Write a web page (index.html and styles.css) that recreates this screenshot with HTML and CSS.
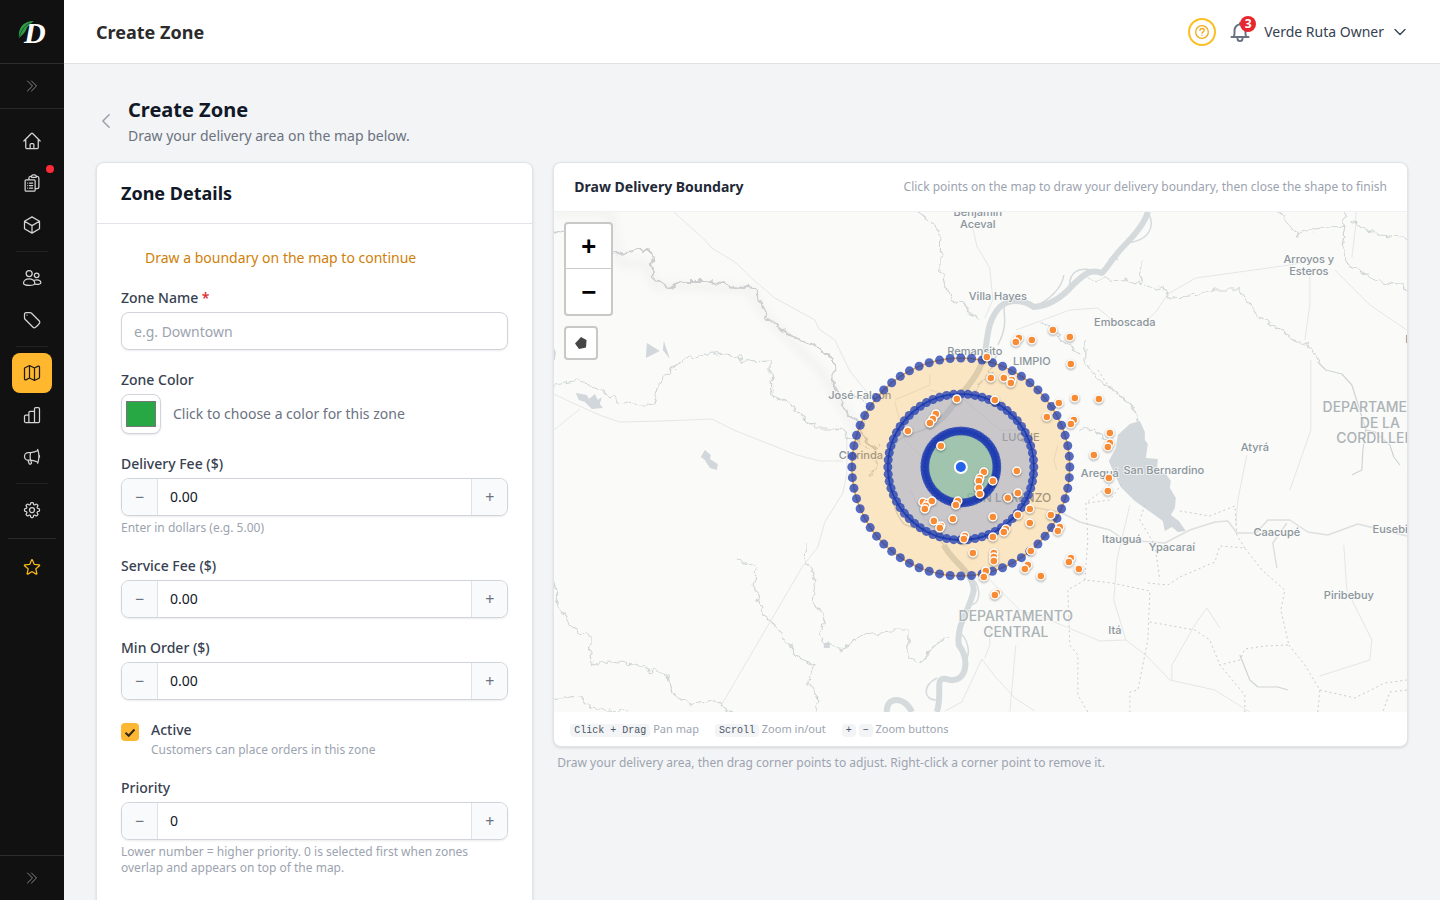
FILE: index.html
```html
<!DOCTYPE html>
<html lang="en">
<head>
<meta charset="utf-8">
<title>Create Zone</title>
<meta name="viewport" content="width=device-width, initial-scale=1">
<link rel="stylesheet" href="styles.css">
</head>
<body>
<div class="app">
  <aside class="sidebar">
    <a class="logo" href="#" aria-label="Home">
      <svg width="32" height="32" viewBox="0 0 32 32">
        <text class="logo-letter" x="8" y="27">D</text>
        <path d="M3 22C2 13 6 5 18 5C14 8 12 9 10 14C9 17 6 19 3 22Z" fill="#2f9e44"/>
        <path d="M3 22C5 15 8 10 14 7" fill="none" stroke="#14532d" stroke-width="1"/>
      </svg>
    </a>
    <button class="side-toggle" type="button" aria-label="Expand menu">
      <svg class="icon" viewBox="0 0 24 24"><path d="M5.25 4.5l7.5 7.5-7.5 7.5m6-15l7.5 7.5-7.5 7.5"/></svg>
    </button>
    <nav class="nav">
      <a class="nav-item" href="#" aria-label="Dashboard"><svg class="icon" viewBox="0 0 24 24"><path d="M2.25 12l8.954-8.955c.44-.439 1.152-.439 1.591 0L21.75 12M4.5 9.75v10.125c0 .621.504 1.125 1.125 1.125H9.75v-4.875c0-.621.504-1.125 1.125-1.125h2.25c.621 0 1.125.504 1.125 1.125V21h4.125c.621 0 1.125-.504 1.125-1.125V9.75M8.25 21h8.25"/></svg></a>
      <a class="nav-item" href="#" aria-label="Orders"><svg class="icon" viewBox="0 0 24 24"><path d="M9 12h3.75M9 15h3.75M9 18h3.75m3 .75H18a2.25 2.25 0 002.25-2.25V6.108c0-1.135-.845-2.098-1.976-2.192a48.424 48.424 0 00-1.123-.08m-5.801 0c-.065.21-.1.433-.1.664 0 .414.336.75.75.75h4.5a.75.75 0 00.75-.75 2.25 2.25 0 00-.1-.664m-5.8 0A2.251 2.251 0 0113.5 2.25H15c1.012 0 1.867.668 2.15 1.586m-5.8 0c-.376.023-.75.05-1.124.08C9.095 4.01 8.25 4.973 8.25 6.108V8.25m0 0H4.875c-.621 0-1.125.504-1.125 1.125v11.25c0 .621.504 1.125 1.125 1.125h9.75c.621 0 1.125-.504 1.125-1.125V9.375c0-.621-.504-1.125-1.125-1.125H8.25zM6.75 12h.008v.008H6.75V12zm0 3h.008v.008H6.75V15zm0 3h.008v.008H6.75V18z"/></svg><span class="dot"></span></a>
      <a class="nav-item" href="#" aria-label="Products"><svg class="icon" viewBox="0 0 24 24"><path d="M21 7.5l-9-5.25L3 7.5m18 0l-9 5.25m9-5.25v9l-9 5.25M3 7.5l9 5.25M3 7.5v9l9 5.25m0-9v9"/></svg></a>
      <hr class="nav-line">
      <a class="nav-item" href="#" aria-label="Customers"><svg class="icon" viewBox="0 0 24 24"><circle cx="8.6" cy="6.6" r="3.6"/><circle cx="17.6" cy="8.8" r="2.8"/><path d="M1.8 18.2C1.8 15 5 13 8.6 13s6.8 2 6.8 5.200c0 1.800-3.400 2.600-6.800 2.600s-6.800-.8-6.800-2.600zM14.800 14.800c.8-.5 1.800-.7 2.800-.7 2.800 0 5 1.600 5 3.700 0 1.500-3 2.300-7.200 1.600"/></svg></a>
      <a class="nav-item" href="#" aria-label="Promotions"><svg class="icon" viewBox="0 0 24 24"><path d="M9.568 3H5.25A2.25 2.25 0 003 5.25v4.318c0 .597.237 1.17.659 1.591l9.581 9.581c.699.699 1.78.872 2.607.33a18.095 18.095 0 005.223-5.223c.542-.827.369-1.908-.33-2.607L11.16 3.66A2.25 2.25 0 009.568 3zM6 6h.008v.008H6V6z"/></svg></a>
      <hr class="nav-line">
      <a class="nav-item nav-active" href="#" aria-label="Zones" aria-current="page"><svg class="icon" viewBox="0 0 24 24"><path d="M9 3.200V18m6-12v14.800m.503-.052l4.875-2.437c.381-.19.622-.58.622-1.006V4.82c0-.836-.88-1.38-1.628-1.006l-3.869 1.934c-.317.159-.69.159-1.006 0L9.503 3.252a1.125 1.125 0 00-1.006 0L3.622 5.689C3.24 5.88 3 6.27 3 6.695V19.18c0 .836.88 1.38 1.628 1.006l3.869-1.934c.317-.159.69-.159 1.006 0l4.994 2.497c.317.158.69.158 1.006 0z"/></svg></a>
      <a class="nav-item" href="#" aria-label="Reports"><svg class="icon" viewBox="0 0 24 24"><path d="M3 13.500C3 12.700 3.700 12 4.500 12h3.750v9H4.500C3.700 21 3 20.300 3 19.500zM8.250 21V9c0-.8.7-1.500 1.500-1.500h5.250V21zM15 21V4.500c0-.8.7-1.500 1.500-1.500h3c.8 0 1.500.7 1.500 1.500v15c0 .8-.7 1.500-1.500 1.500z"/></svg></a>
      <a class="nav-item" href="#" aria-label="Marketing"><svg class="icon" viewBox="0 0 24 24"><path d="M10.34 15.84c-.688-.06-1.386-.09-2.09-.09H7.5a4.5 4.5 0 110-9h.75c.704 0 1.402-.03 2.09-.09m0 9.18c.253.962.584 1.892.985 2.783.247.55.06 1.21-.463 1.511l-.657.38c-.551.318-1.26.117-1.527-.461a20.845 20.845 0 01-1.44-4.282m3.102.069a18.03 18.03 0 01-.59-4.59c0-1.586.205-3.124.59-4.59m0 9.18a23.848 23.848 0 018.835 2.535M10.34 6.66a23.847 23.847 0 008.835-2.535m0 0A23.74 23.74 0 0018.795 3m.38 1.125a23.91 23.91 0 011.014 5.395m-1.014 8.855c-.118.38-.245.754-.38 1.125m.38-1.125a23.91 23.91 0 001.014-5.395m0-3.46c.495.413.811 1.035.811 1.73 0 .695-.316 1.317-.811 1.73m0-3.46a24.347 24.347 0 010 3.46"/></svg></a>
      <hr class="nav-line">
      <a class="nav-item" href="#" aria-label="Settings"><svg class="icon" viewBox="0 0 24 24"><path d="M10.343 3.94c.09-.542.56-.94 1.11-.94h1.093c.55 0 1.02.398 1.11.94l.149.894c.07.424.384.764.78.93.398.164.855.142 1.205-.108l.737-.527a1.125 1.125 0 011.45.12l.773.774c.39.389.44 1.002.12 1.45l-.527.737c-.25.35-.272.806-.107 1.204.165.397.505.71.93.78l.893.15c.543.09.94.56.94 1.109v1.094c0 .55-.397 1.02-.94 1.11l-.893.149c-.425.07-.765.383-.93.78-.165.398-.143.854.107 1.204l.527.738c.32.447.269 1.06-.12 1.45l-.774.773a1.125 1.125 0 01-1.449.12l-.738-.527c-.35-.25-.806-.272-1.203-.107-.397.165-.71.505-.781.929l-.149.894c-.09.542-.56.94-1.11.94h-1.094c-.55 0-1.019-.398-1.11-.94l-.148-.894c-.071-.424-.384-.764-.781-.93-.398-.164-.854-.142-1.204.108l-.738.527c-.447.32-1.06.269-1.45-.12l-.773-.774a1.125 1.125 0 01-.12-1.45l.527-.737c.25-.35.273-.806.108-1.204-.165-.397-.505-.71-.93-.78l-.894-.15c-.542-.09-.94-.56-.94-1.109v-1.094c0-.55.398-1.02.94-1.11l.894-.149c.424-.07.765-.383.93-.78.165-.398.143-.854-.107-1.204l-.527-.738a1.125 1.125 0 01.12-1.45l.773-.773a1.125 1.125 0 011.45-.12l.737.527c.35.25.807.272 1.204.107.397-.165.71-.505.78-.929l.15-.894zM15 12a3 3 0 11-6 0 3 3 0 016 0z"/></svg></a>
      <div class="nav-extra">
        <a class="nav-item nav-star" href="#" aria-label="Upgrade"><svg class="icon" viewBox="0 0 24 24"><path d="M11.48 3.499a.562.562 0 011.04 0l2.125 5.111a.563.563 0 00.475.345l5.518.442c.499.04.701.663.321.988l-4.204 3.602a.563.563 0 00-.182.557l1.285 5.385a.562.562 0 01-.84.61l-4.725-2.885a.563.563 0 00-.586 0L6.982 20.54a.562.562 0 01-.84-.61l1.285-5.386a.562.562 0 00-.182-.557l-4.204-3.602a.563.563 0 01.321-.988l5.518-.442a.563.563 0 00.475-.345L11.48 3.5z"/></svg></a>
      </div>
    </nav>
    <button class="side-toggle side-bottom" type="button" aria-label="Expand menu">
      <svg class="icon" viewBox="0 0 24 24"><path d="M5.25 4.5l7.5 7.5-7.5 7.5m6-15l7.5 7.5-7.5 7.5"/></svg>
    </button>
  </aside>

  <div class="page">
    <header class="topbar">
      <div class="topbar-title">Create Zone</div>
      <div class="topbar-right">
        <button class="help" type="button" aria-label="Help">
          <svg width="16" height="16" viewBox="0 0 24 24"><circle cx="12" cy="12" r="9.500"/><path d="M8.800 9.400c.3-1.700 1.600-2.600 3.300-2.600 1.800 0 3.200 1 3.200 2.700 0 2.300-3.200 2.200-3.200 4.400M12 17v.300"/></svg>
        </button>
        <button class="bell" type="button" aria-label="Notifications">
          <svg width="24" height="24" viewBox="0 0 24 24"><path d="M3.500 17H20.500M5.500 17C7 15 6.500 13 6.500 10.500A5.500 6 0 0 1 17.500 10.500C17.500 13 17 15 18.500 17M9.500 18.500a2.500 2.500 0 0 0 5 0M12 4.500V3"/></svg>
          <span class="badge">3</span>
        </button>
        <button class="user" type="button">Verde Ruta Owner
          <svg width="16" height="16" viewBox="0 0 24 24"><path d="M19.500 8.250l-7.500 7.500-7.500-7.500"/></svg>
        </button>
      </div>
    </header>

    <main class="content">
      <div class="heading">
        <a class="back" href="#" aria-label="Back"><svg width="20" height="20" viewBox="0 0 24 24"><path d="M15.750 19.500L8.250 12l7.500-7.500"/></svg></a>
        <div>
          <h1>Create Zone</h1>
          <p>Draw your delivery area on the map below.</p>
        </div>
      </div>

      <div class="columns">
        <section class="card">
          <h2 class="card-title">Zone Details</h2>
          <form class="form">
            <p class="warning">Draw a boundary on the map to continue</p>
            <div class="field">
              <label for="name">Zone Name <span class="required">*</span></label>
              <input class="text-input" id="name" type="text" placeholder="e.g. Downtown">
            </div>
            <div class="field">
              <label for="color">Zone Color</label>
              <div class="color-row">
                <input class="color-input" id="color" type="color" value="#28a745">
                <span>Click to choose a color for this zone</span>
              </div>
            </div>
            <div class="field">
              <label for="delivery">Delivery Fee ($)</label>
              <div class="stepper"><button type="button" aria-label="Decrease">−</button><input id="delivery" type="text" value="0.00"><button type="button" aria-label="Increase">+</button></div>
              <p class="note">Enter in dollars (e.g. 5.00)</p>
            </div>
            <div class="field">
              <label for="service">Service Fee ($)</label>
              <div class="stepper"><button type="button" aria-label="Decrease">−</button><input id="service" type="text" value="0.00"><button type="button" aria-label="Increase">+</button></div>
            </div>
            <div class="field">
              <label for="min">Min Order ($)</label>
              <div class="stepper"><button type="button" aria-label="Decrease">−</button><input id="min" type="text" value="0.00"><button type="button" aria-label="Increase">+</button></div>
            </div>
            <div class="check-row">
              <span class="check">
                <input id="active" type="checkbox" checked>
                <svg width="18" height="18" viewBox="0 0 18 18"><path d="M4.500 9.800l3.200 3 5.800-6.300"/></svg>
              </span>
              <div>
                <label for="active">Active</label>
                <p class="note">Customers can place orders in this zone</p>
              </div>
            </div>
            <div class="field">
              <label for="priority">Priority</label>
              <div class="stepper"><button type="button" aria-label="Decrease">−</button><input id="priority" type="text" value="0"><button type="button" aria-label="Increase">+</button></div>
              <p class="note">Lower number = higher priority. 0 is selected first when zones overlap and appears on top of the map.</p>
            </div>
          </form>
        </section>

        <div class="map-column">
          <section class="card">
            <div class="map-head">
              <h3>Draw Delivery Boundary</h3>
              <p>Click points on the map to draw your delivery boundary, then close the shape to finish</p>
            </div>
            <div class="map">
              <svg class="map-art" viewBox="554 212 853 500" preserveAspectRatio="xMidYMid slice">
                <defs>
                  <filter id="meander" x="-5%" y="-5%" width="110%" height="110%" color-interpolation-filters="sRGB">
                    <feTurbulence type="fractalNoise" baseFrequency="0.11" numOctaves="2" seed="4"/>
                    <feDisplacementMap in="SourceGraphic" scale="11" xChannelSelector="R" yChannelSelector="G"/>
                  </filter>
                  <filter id="soft"><feGaussianBlur stdDeviation="4"/></filter>
                </defs>
                <g class="roads">
                  <path d="M674 212L704 239L712 248L735 262L755 281L775 298L815 320L819 329L835 340L850 371L867 392M554 430L580 409M557 663M554 394L575 404L602 416L620 422L662 421L712 419L734 430L797 455L820 461H843M847 437V474L843 493L825 522L818 547L803 566L721 706"/>
                  <path d="M973 228L977 246L990 268L993 300L985 318M1168 294L1196 278L1290 265L1305 262M1168 294L1156 312L1147 320M1016 330L1070 310L1098 308L1110 318M1310 270V305L1305 340M1356 212V225L1352 258M1335 270L1370 305L1407 330M1311 360V430L1290 490M1247 455L1238 500L1236 525M990 580L1020 610L1045 618L1100 641L1126 640L1146 655L1170 680L1215 690L1250 712M985 658L990 645V630M945 711L962 702L982 659L994 675L1015 698L1035 711M1010 712L1016 645M1126 640L1114 600L1117 560L1130 505M1172 680V665L1195 625L1207 608L1220 628M1344 545L1347 590L1372 640L1370 660L1320 676"/>
                  <path d="M895 400L930 385V374M930 390L965 400L1000 430M895 402L905 440L935 470M1000 430H1030M910 490L925 520L960 520M1058 445L1054 460L1057 470"/>
                </g>
                <g class="highways">
                  <path d="M1060 512L1080 522L1110 530L1125 540L1165 543L1190 530L1215 522L1228 521L1237 533H1256L1268 520L1290 520L1308 532L1328 535L1358 524L1378 529L1407 536M1287 523L1273 543L1277 568M1020 505L1060 512"/>
                </g>
                <path class="haze" d="M554 212H610L620 264H646L656 286L680 286L750 290L765 315L790 340L820 370L845 410L860 440" filter="url(#soft)"/>
                <g class="streams" filter="url(#meander)">
                  <path class="thick" d="M550 230L566 232L610 254L650 249L655 279L669 289L680 282L705 282L735 286L755 288L762 304L768 320L788 334L813 345L833 358L834 385L843 408L855 420L870 445L880 455"/>
                  <path d="M550 387L578 380L602 390L618 402L635 404L655 406L661 380L685 358L705 355L725 353L745 361L771 360L772 395L790 404L813 428L835 428L850 438L870 450"/>
                  <path d="M553 578L560 610L575 630L590 636L592 665L605 662L635 664L668 676L672 693L690 706L712 701L732 712M552 698L580 695L590 708L630 712M736 561L756 567L755 595L765 615L776 625L790 645L800 660L815 665L808 682L818 700L813 716"/>
                  <path d="M805 543L806 562L815 580L812 600L825 620L820 640L840 650L860 635L890 630L908 630L908 660L920 662L935 645L948 639"/>
                  <path d="M918 212L942 232L941 270L949 300L962 303L978 320"/>
                  <path d="M1087 278L1125 280L1140 285L1140 260M1145 285L1165 290L1170 298L1190 297L1215 290L1240 290L1258 315L1285 335L1308 345L1320 362"/>
                  <path d="M1279 210L1297 235L1325 228L1345 225L1345 208M1345 225L1342 250L1350 265L1375 280L1400 285L1412 297M1350 222L1380 235L1412 238M1086 340L1086 360L1100 380L1120 395L1138 415L1140 425M1080 430L1095 428L1108 443"/>
                  <path d="M1040 320L1052 330L1070 345L1082 355M1000 352L990 372L970 395M855 395L870 405L860 430M880 445L870 480"/>
                </g>
                <g class="streams">
                  <path d="M1318 362L1326 370L1342 374L1352 385L1358 404L1366 430L1363 450L1362 470L1352 475M1366 430L1375 432L1390 445L1394 457L1400 465M1240 655L1250 680L1258 687L1278 687L1288 690"/>
                </g>
                <g class="river">
                  <path d="M1148 212C1144 226 1130 240 1124 246C1112 258 1108 268 1102 273C1090 268 1084 275 1073 285C1060 300 1048 306 1034 307C1024 300 1010 298 1000 307C988 320 988 335 986 347C984 365 975 378 965 390C953 405 945 420 928 428M944 545C952 562 972 570 974 590C970 610 956 625 959 645C970 660 967 682 950 680C932 674 944 690 937 712M887 712C886 696 905 696 912 712"/>
                  <path class="channel" d="M1148 212C1156 226 1150 242 1124 243M1102 273C1078 264 1068 272 1070 290M1108 268C1108 256 1114 255 1118 260M1034 307C1050 300 1062 288 1064 275M1005 303C1002 315 1010 322 998 345M974 580C982 590 980 605 970 605M937 678C922 686 924 700 936 700M959 632C970 640 970 655 966 660M928 428C910 436 900 434 892 450C886 480 892 510 904 524C915 530 930 528 944 545"/>
                </g>
                <g class="lake">
                  <path d="M1140 421L1145 432L1145 440L1148 444L1146 458L1158 459L1157 471L1166 474L1171 481L1170 488L1176 498L1175 508L1171 515L1179 521L1186 531L1178 532L1172 527L1165 531L1163 521L1152 513L1135 501L1121 487L1115 475L1109 461L1116 448L1118 435L1130 424Z"/>
                  <path d="M647 343L660 351L646 358ZM664 341L667 350L670 359L663 350ZM576 393L587 395L589 399L595 394L598 400L602 397L600 404L603 408L592 409L585 402L579 400ZM701 457L705 450L711 455L710 459L718 464L717 470L710 468L705 460ZM824 643H830V648H824ZM554 348L556 352L555 360L554 360Z"/>
                </g>
                <path class="borders" d="M1110 485L1086 503L1088 540L1085 580L1112 583L1150 591L1148 640L1138 690L1130 692V712M1088 503L1110 500L1122 484M1098 370L1110 388L1125 400M1145 505L1140 520L1155 545L1160 580M1085 580L1068 590L1070 645L1078 655V695L1088 712M1148 583L1168 585L1180 577L1215 562L1220 546L1245 548L1262 570L1285 590L1281 610L1289 645L1265 646L1245 649L1240 660L1220 665L1245 695V712M1289 645L1305 665L1320 690L1318 712M1320 690L1355 698L1385 683L1407 680M1150 622L1195 630L1210 640L1220 665M1180 511L1210 516L1235 506L1237 535L1245 548M1407 690L1390 692L1383 712"/>
                <g class="places">
                  <text x="978" y="216">Benjamín</text><text x="978" y="228">Aceval</text>
                  <text x="998" y="300">Villa Hayes</text><text x="975" y="355">Remansito</text>
                  <text x="1125" y="326">Emboscada</text><text x="1309" y="263">Arroyos y</text><text x="1309" y="275">Esteros</text>
                  <text x="1032" y="365">LIMPIO</text><text x="860" y="399">José Falcón</text><text x="861" y="459">Clorinda</text>
                  <text x="1021" y="441">LUQUE</text><text x="1009" y="502" class="city">SAN LORENZO</text>
                  <text x="1100" y="477">Areguá</text><text x="1164" y="474">San Bernardino</text>
                  <text x="1255" y="451">Atyrá</text><text x="1122" y="543">Itauguá</text><text x="1172" y="551">Ypacaraí</text>
                  <text x="1277" y="536">Caacupé</text><text x="1399" y="533">Eusebio A</text><text x="1349" y="599">Piribebuy</text>
                  <text x="1115" y="634">Itá</text><text x="1409" y="343">P</text>
                </g>
                <g class="regions">
                  <text x="1016" y="621">DEPARTAMENTO</text><text x="1016" y="637">CENTRAL</text>
                  <text x="1380" y="412">DEPARTAMENTO</text><text x="1380" y="428">DE LA</text><text x="1380" y="443">CORDILLERA</text>
                </g>
                <circle class="zone zone-far" cx="961" cy="467" r="109"/>
                <circle class="zone zone-mid" cx="961" cy="467" r="73"/>
                <circle class="zone zone-near" cx="961" cy="467" r="36"/>
                <g id="vertices" class="vertices"></g>
                <circle class="centre" cx="961" cy="467" r="6"/>
                <g id="orders" class="orders"></g>
              </svg>
              <div class="map-tools">
                <div class="tool-group zoom-group"><button type="button" aria-label="Zoom in">+</button><button type="button" aria-label="Zoom out">−</button></div>
                <div class="tool-group draw-group"><button type="button" aria-label="Draw a polygon"><svg width="12" height="12" viewBox="0 0 12 12"><path d="M6 0L11.500 3L11 10.500L4 12L0 6.500Z"/></svg></button></div>
              </div>
            </div>
            <div class="map-foot">
              <span><kbd>Click + Drag</kbd> Pan map</span>
              <span><kbd>Scroll</kbd> Zoom in/out</span>
              <span><kbd>+</kbd> <kbd>−</kbd> Zoom buttons</span>
            </div>
          </section>
          <p class="map-note">Draw your delivery area, then drag corner points to adjust. Right-click a corner point to remove it.</p>
        </div>
      </div>
    </main>
  </div>
</div>
<script src="map.js"></script>
</body>
</html>
```
FILE: styles.css
```css
* { box-sizing: border-box; }
body, h1, h2, h3, p { margin: 0; }
body { font: 14px/20px "Noto Sans", sans-serif; color: #374151; background: #f3f4f6; }
button, input { font: inherit; color: inherit; }
button { border: 0; padding: 0; background: none; cursor: pointer; }
svg { display: block; }
.app { display: flex; height: 100vh; }

.sidebar { flex: 0 0 64px; display: flex; flex-direction: column; background: #111; }
.logo { height: 64px; display: flex; align-items: center; justify-content: center; border-bottom: 1px solid #2b2e31; }
.logo-letter { font: italic bold 30px "Liberation Serif", serif; fill: #fff; }
.icon { width: 20px; height: 20px; fill: none; stroke: currentColor; stroke-width: 1.5; stroke-linecap: round; stroke-linejoin: round; }
.side-toggle { height: 45px; display: flex; align-items: center; justify-content: center; color: #858585; border-bottom: 1px solid #25292c; }
.side-toggle .icon { width: 16px; height: 16px; }
.side-bottom { border-bottom: 0; border-top: 1px solid #2b2e31; }
.nav { flex: 1; display: flex; flex-direction: column; align-items: center; gap: 2px; padding: 12px 8px; }
.nav-item { position: relative; width: 40px; height: 40px; display: flex; align-items: center; justify-content: center; border-radius: 8px; color: #d4d4d4; }
.nav-active { background: #ffb82e; color: #1f1a10; }
.nav-line { width: 32px; height: 1px; margin: 4px 0; border: 0; background: #222; }
.dot { position: absolute; top: 2px; right: -2px; width: 8px; height: 8px; border-radius: 50%; background: #fb2c36; }
.nav-extra { align-self: stretch; display: flex; justify-content: center; margin-top: 6px; padding-top: 8px; border-top: 1px solid #262a2d; }
.nav-star { color: #fbb91a; }

.page { flex: 1; min-width: 0; display: flex; flex-direction: column; }
.topbar { flex: 0 0 64px; display: flex; align-items: center; justify-content: space-between; padding: 0 32px; background: #fff; border-bottom: 1px solid #dfe1e4; }
.topbar-title { font-size: 18px; font-weight: 700; color: #2b2b2b; }
.topbar-right { display: flex; align-items: center; gap: 12px; }
.topbar-right svg, .back svg { fill: none; stroke: currentColor; stroke-linecap: round; stroke-linejoin: round; stroke-width: 2; }
.help { width: 28px; height: 28px; display: flex; align-items: center; justify-content: center; border: 2px solid #fbbf24; border-radius: 50%; color: #f3a81c; }
.bell { position: relative; color: #6b7280; }
.badge { position: absolute; top: -4px; right: -4px; width: 16px; height: 16px; border-radius: 50%; background: #e7262f; color: #fff; font-size: 12px; line-height: 16px; font-weight: 700; text-align: center; }
.user { display: flex; align-items: center; gap: 8px; color: #374151; }

.content { flex: 1; overflow: auto; scrollbar-width: none; padding: 32px; }
.heading { display: flex; align-items: center; gap: 12px; margin-bottom: 16px; }
.heading h1 { font-size: 20px; line-height: 28px; font-weight: 700; color: #111827; margin-bottom: 2px; }
.heading p { color: #6b7280; }
.back { color: #9ca3af; }
.columns { display: grid; grid-template-columns: calc(100% / 3) minmax(0, 1fr); gap: 20px; align-items: start; }
.card { background: #fff; border: 1px solid #e1e4e8; border-radius: 8px; box-shadow: 0 1px 3px rgba(0,0,0,.12); overflow: hidden; }
.card-title { padding: 16px 24px; font-size: 18px; line-height: 28px; font-weight: 700; color: #111827; border-bottom: 1px solid #e1e4e8; }

.form { display: flex; flex-direction: column; gap: 20px; padding: 24px 24px 32px; }
.warning { padding-left: 24px; color: #d08008; }
.field { display: flex; flex-direction: column; gap: 4px; }
label { font-weight: 500; display: block; }
.required { color: #dc2626; }
.text-input, .stepper { height: 38px; border: 1px solid #d1d5db; border-radius: 8px; background: #fff; box-shadow: 0 1px 2px rgba(0,0,0,.08); }
.text-input { padding: 0 12px; width: 100%; line-height: 20px; }
.text-input::placeholder { color: #9ca3af; }
.color-row { display: flex; align-items: center; gap: 12px; color: #6b7280; }
.color-input { width: 40px; height: 40px; padding: 2px; border: 1px solid #d1d5db; border-radius: 8px; background: #fff; box-shadow: 0 1px 2px rgba(0,0,0,.1); }
.stepper { display: flex; overflow: hidden; }
.stepper button { flex: 0 0 36px; background: #f9fafb; color: #6b7280; font-size: 16px; }
.stepper button:first-child { border-right: 1px solid #dfe2e6; }
.stepper button:last-child { border-left: 1px solid #dfe2e6; }
.stepper input { flex: 1; min-width: 0; padding: 0 12px; border: 0; color: #111827; background: #fff; }
.note { font-size: 12px; line-height: 16px; color: #9ca3af; }
.check-row { display: flex; gap: 12px; }
.check-row .note { margin-top: 2px; }
.check { position: relative; width: 18px; height: 18px; margin-top: 3px; }
.check input { appearance: none; display: block; width: 18px; height: 18px; margin: 0; border-radius: 4px; background: #fdb733; }
.check svg { position: absolute; inset: 0; pointer-events: none; fill: none; stroke: #33291a; stroke-width: 2; }

.map-head { display: flex; align-items: center; justify-content: space-between; gap: 16px; padding: 14px 20px; }
.map-head h3 { font-size: 14px; font-weight: 700; color: #1f2937; }
.map-head p { font-size: 12px; color: #9ca3af; }
.map { position: relative; height: 501px; background: #fafaf8; border-top: 1px solid #f0f1f2; }
.map-art { width: 100%; height: 100%; }
.map-tools { position: absolute; top: 10px; left: 10px; display: flex; flex-direction: column; align-items: flex-start; gap: 10px; }
.tool-group { display: flex; flex-direction: column; border: 2px solid #c8c8c7; border-radius: 4px; background: #fff; }
.zoom-group button { width: 45px; height: 45px; font: bold 24px/44px "DejaVu Sans Mono", monospace; color: #000; }
.zoom-group button:first-child { border-bottom: 1px solid #ccc; }
.draw-group button { width: 30px; height: 30px; display: flex; align-items: center; justify-content: center; }
.draw-group path { fill: #464646; }
.map-foot { display: flex; gap: 16px; padding: 7px 16px; font-size: 11px; color: #9ca3af; }
kbd { padding: 1px 4px; border-radius: 4px; background: #f3f4f6; color: #4b5563; font: 10px "Liberation Mono", monospace; }
.map-note { padding: 6px 4px 0; font-size: 12px; color: #9ca3af; }

.roads path, .highways path, .streams path, .river path, .borders { fill: none; stroke-linejoin: round; }
.roads path { stroke: #e5e7e7; }
.highways path { stroke: #dde0e0; stroke-width: 1.5; }
.streams path { stroke: #cfd5d6; stroke-width: 1.2; }
.streams .thick { stroke: #cccdce; stroke-width: 2; }
.haze { fill: none; stroke: #ededed; stroke-width: 8; opacity: .6; }
.river path { stroke: #d5dadc; stroke-width: 6; }
.river .channel { stroke-width: 1.5; }
.lake path { fill: #d1d7da; }
.borders { stroke: #d3c9cc; stroke-dasharray: 2 3; }
.places text, .regions text { text-anchor: middle; font-family: Inter, sans-serif; font-weight: 500; paint-order: stroke; stroke: #fafaf8; stroke-width: 2; stroke-opacity: .7; }
.places text { font-size: 11px; fill: #8b959d; }
.places .city { font-size: 12px; }
.regions text { font-size: 14px; fill: #acb3b7; }
.zone { stroke-width: 1.5; }
.zone-far { fill: #ff9f0a; fill-opacity: .22; stroke: #e8a33a; }
.zone-mid { fill: #8ca2d3; fill-opacity: .45; stroke: #1e40af; }
.zone-near { fill: #85c199; fill-opacity: .6; stroke: #1e40af; }
.vertices circle { fill: #1e3bb0; fill-opacity: .75; }
.centre { fill: #2563eb; stroke: #fff; stroke-width: 2; }
.orders circle { fill: #f88b33; stroke: #fff; stroke-width: 1.5; }
.orders { filter: drop-shadow(0 1px 1px rgba(0,0,0,.35)); }
```
FILE: map.js
```javascript
const NS = "http://www.w3.org/2000/svg";
const centre = [961, 467];
const rings = [109, 73, 36];
const orders = [
  [1019,338],[1016,342],[1032,340],[1053,330],[1070,337],[1071,364],[987,357],[991,378],[1004,378],
  [1012,380],[1011,383],[1059,403],[1075,398],[1099,399],[1047,417],[1074,420],[1071,424],[1110,433],
  [1110,443],[1108,447],[1094,455],[1109,478],[1108,491],[957,399],[995,400],[936,414],[933,419],
  [930,423],[908,431],[941,446],[984,472],[980,478],[979,481],[979,488],[980,494],[993,481],[1017,471],
  [1018,493],[1008,498],[923,502],[928,503],[932,501],[926,506],[925,509],[958,501],[956,505],[953,519],
  [934,521],[941,526],[940,528],[993,517],[1018,515],[1030,509],[1030,523],[1051,515],[1060,527],
  [1058,531],[1006,529],[1004,532],[993,537],[965,536],[964,539],[973,553],[994,553],[994,557],[994,561],
  [1031,551],[1028,565],[1025,569],[1041,576],[1071,558],[1069,562],[1079,569],[986,571],[984,577],
  [997,593],[995,595]
];

function addCircle(parent, x, y, r) {
  const c = document.createElementNS(NS, "circle");
  c.setAttribute("cx", x);
  c.setAttribute("cy", y);
  c.setAttribute("r", r);
  parent.appendChild(c);
}

const vertices = document.getElementById("vertices");
rings.forEach(radius => {
  for (let i = 0; i < 64; i++) {
    const a = i * Math.PI / 32;
    addCircle(vertices, centre[0] + radius * Math.cos(a), centre[1] + radius * Math.sin(a), 4.5);
  }
});

const orderLayer = document.getElementById("orders");
orders.forEach(([x, y]) => addCircle(orderLayer, x, y, 4));
```
